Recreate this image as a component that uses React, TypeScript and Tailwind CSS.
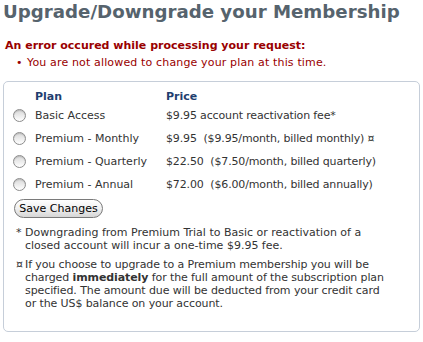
import React from "react";

const plans = [
  { name: "Basic Access", price: "$9.95", note: "account reactivation fee*" },
  { name: "Premium - Monthly", price: "$9.95", note: " ($9.95/month, billed monthly) \u00a4" },
  { name: "Premium - Quarterly", price: "$22.50", note: " ($7.50/month, billed quarterly)" },
  { name: "Premium - Annual", price: "$72.00", note: " ($6.00/month, billed annually)" },
];

function Radio() {
  return (
    <span className="block w-[13px] h-[13px] rounded-full border border-[#8c8c8c] bg-gradient-to-b from-[#d8d8d8] to-[#ffffff] shadow-[inset_0_1px_1px_rgba(0,0,0,0.15)]" />
  );
}

export default function App() {
  return (
    <div
      className="w-[423px] h-[342px] bg-white text-[11px] leading-[13px] text-[#333333] overflow-hidden"
      style={{ fontFamily: '"DejaVu Sans", Verdana, sans-serif' }}
    >
      <h1 className="pl-[3px] pt-[1px] text-[18.2px] leading-[22px] font-bold text-[#56636d] whitespace-nowrap">
        Upgrade/Downgrade your Membership
      </h1>
      <div className="mt-[16px] pl-[5px] font-bold text-[#990000] whitespace-nowrap">
        An error occured while processing your request:
      </div>
      <div className="mt-[4px] pl-[16px] flex text-[#990000] whitespace-nowrap">
        <span className="w-[11px]">•</span>
        <span className="tracking-[0.15px]">You are not allowed to change your plan at this time.</span>
      </div>
      <div className="mx-[3px] mt-[12px] h-[251px] rounded-[5px] border border-[#c6ced9]">
        <div className="pl-[9px] pt-[6px]">
          <div className="grid grid-cols-[22px_131px_auto] items-center">
            <div />
            <div className="font-bold text-[#1f3e6f] h-[16px] flex items-center">Plan</div>
            <div className="font-bold text-[#1f3e6f] h-[16px] flex items-center">Price</div>
            {plans.map((p) => (
              <React.Fragment key={p.name}>
                <div className="h-[23px] flex items-center">
                  <Radio />
                </div>
                <div className="h-[23px] flex items-center whitespace-nowrap">{p.name}</div>
                <div className="h-[23px] flex items-center whitespace-pre tracking-[-0.15px]">
                  {p.price} {p.note}
                </div>
              </React.Fragment>
            ))}
          </div>
          <button className="mt-[3px] ml-[1px] w-[89px] h-[19px] rounded-full border border-[#7a7a7a] bg-gradient-to-b from-[#ffffff] via-[#f0f0f0] to-[#d6d6d6] text-[11px] leading-[17px] text-black whitespace-nowrap">
            Save Changes
          </button>
          <div className="mt-[8px] flex whitespace-nowrap">
            <span className="w-[10px] pl-[3px] shrink-0">*</span>
            <span className="pl-[2px]">
              Downgrading from Premium Trial to Basic or reactivation of a
              <br />
              closed account will incur a one-time $9.95 fee.
            </span>
          </div>
          <div className="mt-[6px] flex whitespace-nowrap">
            <span className="w-[10px] pl-[3px] shrink-0">{"\u00a4"}</span>
            <span className="pl-[2px] tracking-[-0.1px]">
              If you choose to upgrade to a Premium membership you will be
              <br />
              charged <b>immediately</b> for the full amount of the subscription plan
              <br />
              specified. The amount due will be deducted from your credit card
              <br />
              or the US$ balance on your account.
            </span>
          </div>
        </div>
      </div>
    </div>
  );
}
